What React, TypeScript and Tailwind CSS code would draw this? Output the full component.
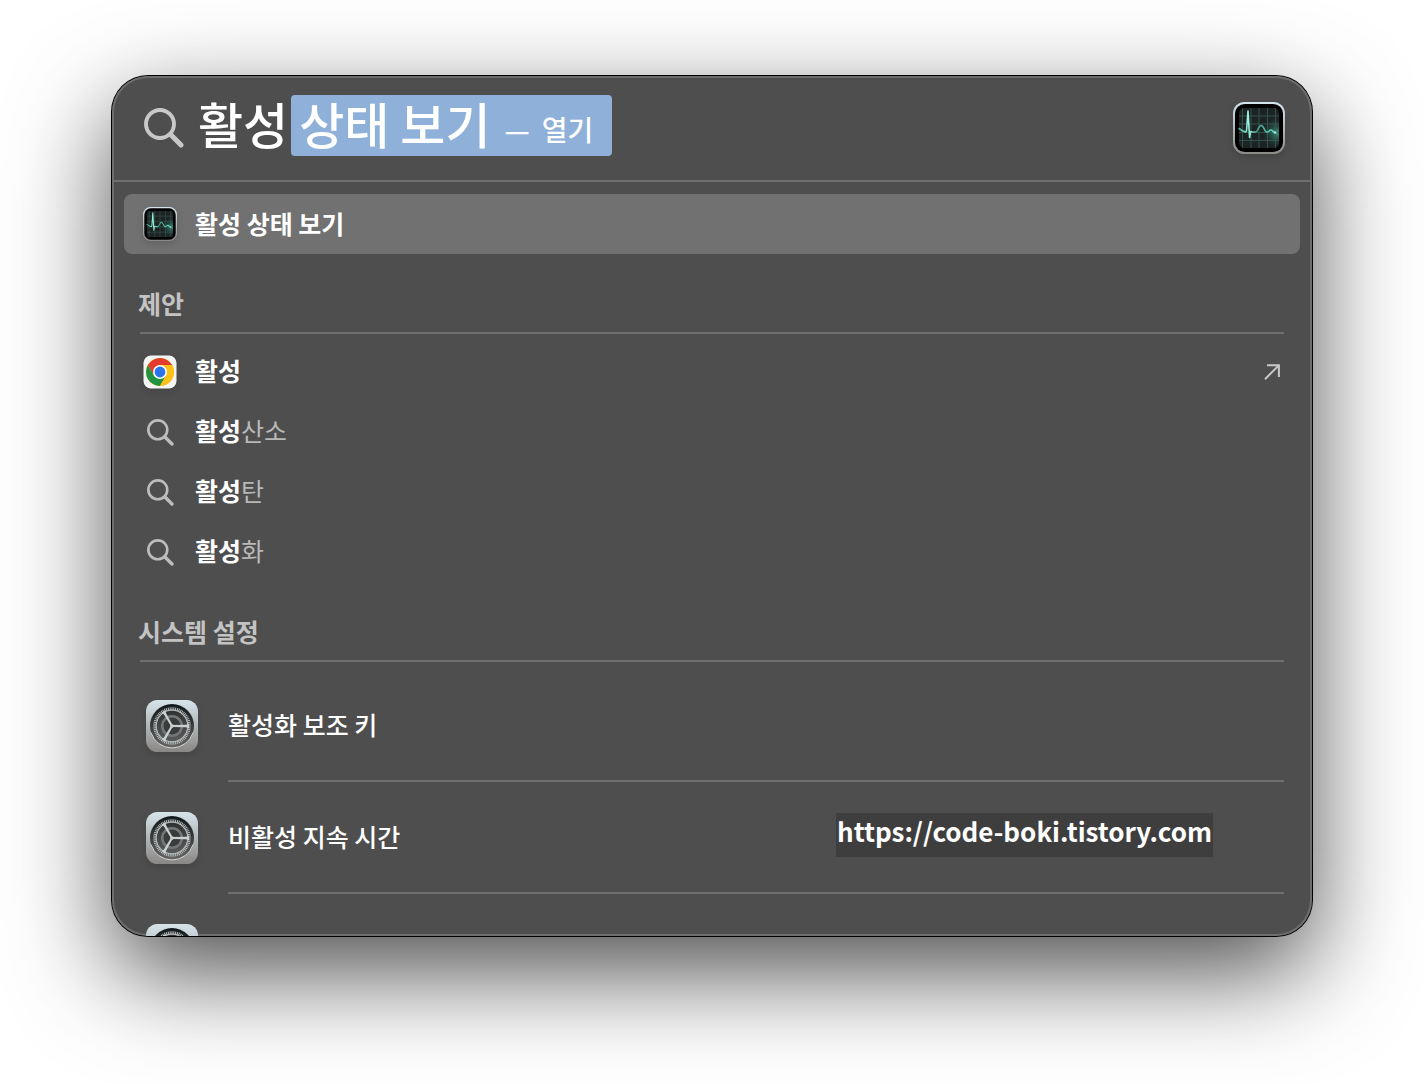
import React, { useState } from "react";

const suggestions = [
  { match: "활성", rest: "", icon: "chrome" },
  { match: "활성", rest: "산소", icon: "search" },
  { match: "활성", rest: "탄", icon: "search" },
  { match: "활성", rest: "화", icon: "search" },
];

const settings = [
  { name: "활성화 보조 키", link: "" },
  { name: "비활성 지속 시간", link: "https://code-boki.tistory.com" },
];

const TEETH = Array.from({ length: 60 }, (_, i) => i * 6);

function SearchIcon({ className }: { className: string }) {
  return (
    <svg
      viewBox="0 0 40 40"
      className={className}
      fill="none"
      stroke="currentColor"
      strokeLinecap="round"
      aria-hidden="true"
    >
      <circle cx="16" cy="16" r="14" strokeWidth="3.9" />
      <path d="M26.6 26.6 37 37" strokeWidth="5" />
    </svg>
  );
}

function ActivityIcon({ className }: { className: string }) {
  return (
    <svg viewBox="0 0 52 52" className={className} aria-hidden="true">
      <defs>
        <linearGradient id="monitor-frame" x1="0" y1="0" x2="0" y2="1">
          <stop offset="0" stopColor="#d3e6ee" />
          <stop offset="1" stopColor="#8b8885" />
        </linearGradient>
        <radialGradient id="monitor-glow" cx="0.95" cy="0.62" r="0.4">
          <stop offset="0" stopColor="#3a9480" />
          <stop offset="1" stopColor="#1d2f2c" stopOpacity="0" />
        </radialGradient>
        <linearGradient id="monitor-line" gradientUnits="userSpaceOnUse" x1="6" y1="0" x2="43" y2="0">
          <stop offset="0" stopColor="#3fae98" />
          <stop offset="0.25" stopColor="#9df5e2" />
          <stop offset="0.5" stopColor="#3f9f8c" />
          <stop offset="1" stopColor="#6fe0c8" />
        </linearGradient>
      </defs>
      <rect width="52" height="52" rx="11.5" fill="url(#monitor-frame)" />
      <rect x="2" y="2" width="48" height="48" rx="9.8" fill="#000" />
      <rect x="6" y="6" width="40" height="40" rx="5" fill="#1b2423" />
      <rect x="6" y="6" width="40" height="40" rx="5" fill="url(#monitor-glow)" />
      <path
        d="M9.5 6v40M18 6v40M26 6v40M34.5 6v40M42.5 6v40M6 14h40M6 22h40M6 30.5h40M6 38.5h40"
        stroke="#3a5a54"
        strokeWidth="1"
        opacity="0.85"
      />
      <path
        d="M6 26.5l3 2 3.5 1.5 1-1L15 9l1.6 26.5 1-6 2 .5h3c2.5 0 2.5-6.5 5.500-6.500s3 6 5.500 6.500 2.500-2.500 4.500-2 1.500 2.500 4 2.500"
        fill="none"
        stroke="url(#monitor-line)"
        strokeWidth="1.6"
        strokeLinejoin="round"
        strokeLinecap="round"
      />
      <circle cx="42.2" cy="30.5" r="1.2" fill="#8ff5e0" />
    </svg>
  );
}

function ChromeIcon({ className }: { className: string }) {
  return (
    <svg viewBox="0 0 34 34" className={className} aria-hidden="true">
      <rect x="0.5" y="0.5" width="33" height="33" rx="7.5" fill="#f4f4f4" />
      <circle cx="17" cy="17" r="14" fill="#fbc116" />
      <path d="M17 10H29.12A14 14 0 0 0 4.88 10l6.06 10.5z" fill="#e33b2e" />
      <path d="M4.88 10A14 14 0 0 0 17 31l6.06-10.5H10.94z" fill="#229342" />
      <path d="M17 10h12.12A14 14 0 0 1 17 31l6.06-10.5z" fill="#fbc116" />
      <circle cx="17" cy="17" r="7" fill="#fff" />
      <circle cx="17" cy="17" r="5.4" fill="#2a74ea" />
    </svg>
  );
}

function GearIcon({ className }: { className: string }) {
  return (
    <svg viewBox="0 0 52 52" className={className} aria-hidden="true">
      <defs>
        <linearGradient id="gear-plate" x1="0" y1="0" x2="0" y2="1">
          <stop offset="0" stopColor="#d6e5eb" />
          <stop offset="1" stopColor="#8a8785" />
        </linearGradient>
        <linearGradient id="gear-well" x1="0" y1="0" x2="0" y2="1">
          <stop offset="0" stopColor="#10181a" />
          <stop offset="0.5" stopColor="#3b3c3c" />
          <stop offset="1" stopColor="#666463" />
        </linearGradient>
        <linearGradient id="gear-inner" x1="0" y1="0" x2="0" y2="1">
          <stop offset="0" stopColor="#2f3131" />
          <stop offset="1" stopColor="#5b5b5a" />
        </linearGradient>
      </defs>
      <rect width="52" height="52" rx="11.5" fill="url(#gear-plate)" />
      <circle cx="26" cy="26" r="22" fill="url(#gear-well)" />
      <path
        d="M5 32.5a22 22 0 0 0 42 0"
        fill="none"
        stroke="#d2d2d0"
        strokeWidth="1"
      />
      <g stroke="#b9c0c2" strokeWidth="1">
        {TEETH.map((deg) => (
          <path key={deg} d="M26 7.2v3" transform={`rotate(${deg} 26 26)`} />
        ))}
      </g>
      <circle cx="26" cy="26" r="15.8" fill="url(#gear-inner)" stroke="#b4babc" strokeWidth="1.2" />
      <circle cx="26" cy="26" r="9.8" fill="#3a3c3c" stroke="#747778" strokeWidth="2.6" />
      <g fill="#cbd0d1">
        <path d="M26 25l14-.2 3-1v4.400l-3-1-14-.2z" />
        <path d="M26 25l14-.2 3-1v4.400l-3-1-14-.2z" transform="rotate(120 26 26)" />
        <path d="M26 25l14-.2 3-1v4.400l-3-1-14-.2z" transform="rotate(240 26 26)" />
        <circle cx="26" cy="26" r="1.8" />
      </g>
    </svg>
  );
}

function SectionTitle({ children }: { children: React.ReactNode }) {
  return (
    <h2 className="mx-7 flex h-14 items-center border-b-2 border-[#6f6f6f] pb-0.5 text-[25px] font-bold text-[#c3c3c3]">
      <span className="-ml-0.5">{children}</span>
    </h2>
  );
}

export default function App() {
  const [query, setQuery] = useState("활성");

  return (
    <div className="h-screen bg-white px-28 pt-19 pb-37 font-['Noto_Sans_CJK_KR',sans-serif] text-white">
      <main className="h-full overflow-hidden rounded-[36px] bg-[#4e4e4e] shadow-[inset_0_0_0_2px_#6e6e6e,0_0_0_1px_#000,0_36px_100px_rgba(0,0,0,0.7)]">

        {/* SEARCH FIELD */}
        <header className="flex h-[106px] items-center border-b-2 border-[#6f6f6f] pr-[27px] pl-8">
          <SearchIcon className="size-10 shrink-0 text-[#c8c8c8]" />
          <div className="ml-[14px] flex items-center pb-1.5">
            <input
              aria-label="검색"
              value={query}
              onChange={(e) => setQuery(e.target.value)}
              className="h-[61px] field-sizing-content bg-transparent pb-1 text-[49px] font-medium outline-none"
            />
            <span className="ml-[3px] flex h-[61px] items-center rounded-sm bg-[#8eb0d9] pr-[19px] pl-2 whitespace-nowrap">
              <span className="pb-1 text-[49px] font-medium">상태 보기</span>
              <span className="ml-3.5 flex gap-3 pt-2 text-[28px] font-medium">
                <span>—</span>
                <span>열기</span>
              </span>
            </span>
          </div>
          <ActivityIcon className="ml-auto size-[52px] shrink-0 drop-shadow-md" />
        </header>

        {/* TOP HIT */}
        <button
          type="button"
          className="mx-3 mt-3 flex h-15 w-[calc(100%-24px)] items-center gap-[18px] rounded-lg bg-[#717171] px-[19px] text-left text-[25px] font-bold"
        >
          <ActivityIcon className="size-[34px] shrink-0 drop-shadow-md" />
          활성 상태 보기
        </button>

        {/* SUGGESTIONS */}
        <section className="mt-6">
          <SectionTitle>제안</SectionTitle>
          <ul className="mt-2">
            {suggestions.map((item) => (
              <li key={item.match + item.rest}>
                <button
                  type="button"
                  className="flex h-15 w-full items-center gap-[18px] pr-8 pl-[31px] text-left text-[25px]"
                >
                  <span className="flex size-[34px] shrink-0 items-center justify-center">
                    {item.icon === "chrome" ? (
                      <ChromeIcon className="size-[34px] drop-shadow-md" />
                    ) : (
                      <SearchIcon className="size-[27px] text-[#bdbdbd]" />
                    )}
                  </span>
                  <span className="grow pb-0.5">
                    <span className="font-bold">{item.match}</span>
                    <span className="font-normal text-[#b8b8b8]">{item.rest}</span>
                  </span>
                  {item.icon === "chrome" && (
                    <svg
                      viewBox="0 0 16 16"
                      className="size-4 text-[#c8c8c8]"
                      fill="none"
                      stroke="currentColor"
                      strokeWidth="2"
                      aria-hidden="true"
                    >
                      <path d="M1 15.2 14.6 1.6M3 1.2H14.9V13" />
                    </svg>
                  )}
                </button>
              </li>
            ))}
          </ul>
        </section>

        {/* SYSTEM SETTINGS */}
        <section className="mt-6">
          <SectionTitle>시스템 설정</SectionTitle>
          <ul className="mt-2">
            {settings.map((item) => (
              <li key={item.name} className="flex pr-7 pl-[34px]">
                <GearIcon className="mt-[30px] size-[52px] shrink-0 drop-shadow-md" />
                <div className="ml-[30px] flex h-28 grow items-center justify-between border-b-2 border-[#6f6f6f]">
                  <button type="button" className="text-left text-[25px] font-medium">
                    {item.name}
                  </button>
                  {item.link && (
                    <a
                      href={item.link}
                      className="mr-[71px] mb-1 h-11 bg-[#3e3e3e] px-px text-[26px] leading-9 font-bold"
                    >
                      {item.link}
                    </a>
                  )}
                </div>
              </li>
            ))}
            <li className="pl-[34px]">
              <GearIcon className="mt-[30px] size-[52px]" />
            </li>
          </ul>
        </section>
      </main>
    </div>
  );
}
